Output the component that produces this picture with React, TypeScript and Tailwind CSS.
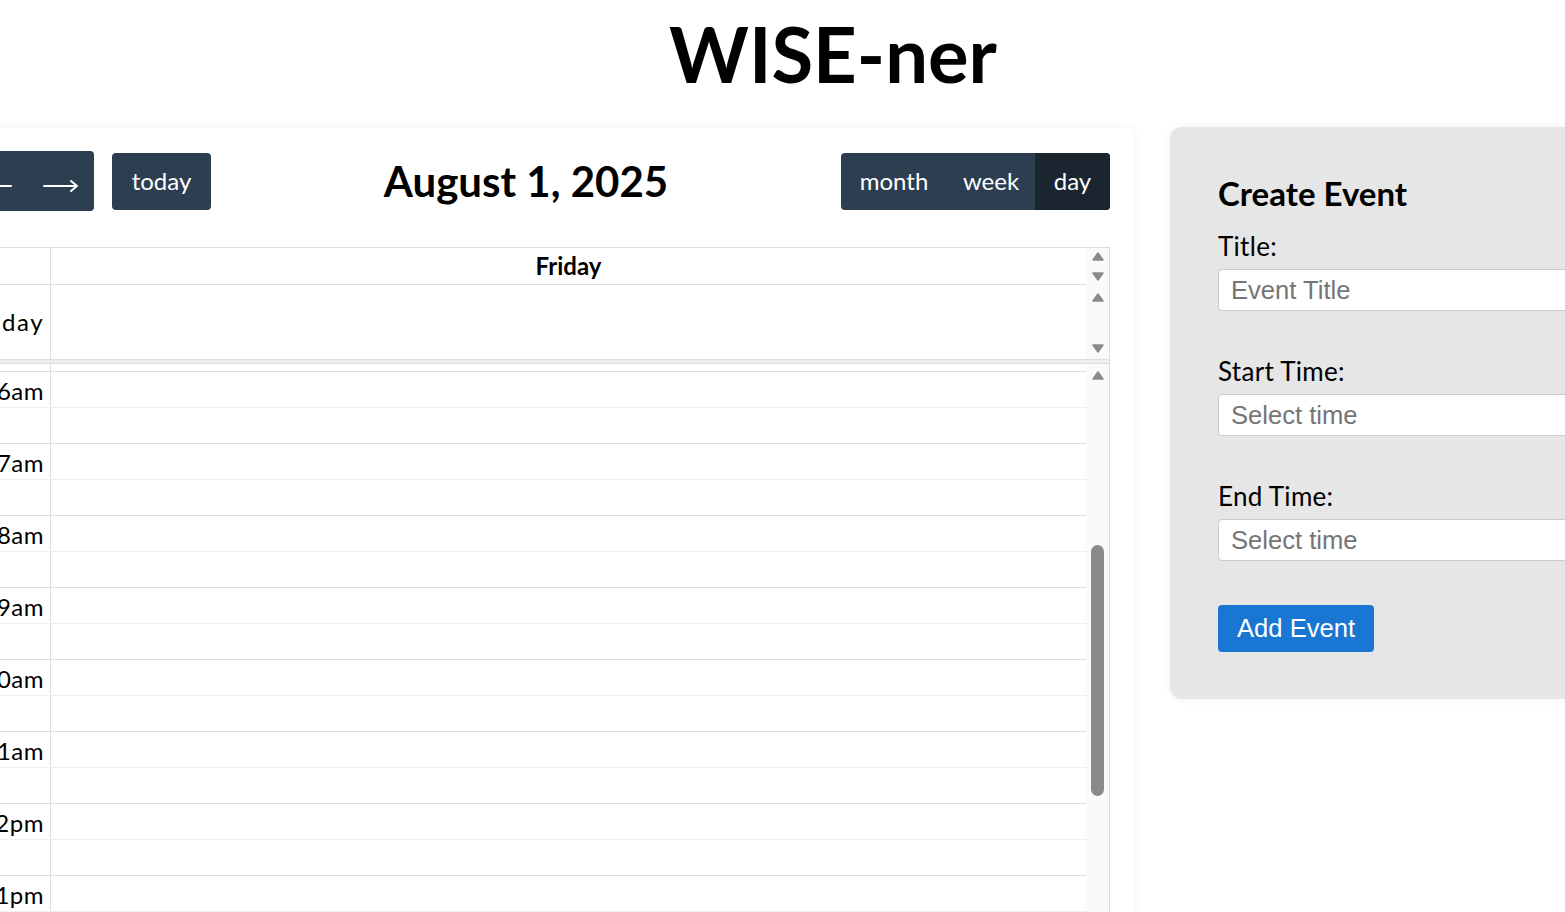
import React from "react";

function Up() {
  return (
    <svg width="12" height="9" viewBox="0 0 12 9" className="block">
      <path d="M6 1 L11 8 L1 8 Z" fill="#8a8a8a" stroke="#8a8a8a" strokeWidth="1.5" strokeLinejoin="round" />
    </svg>
  );
}
function Down() {
  return (
    <svg width="12" height="9" viewBox="0 0 12 9" className="block">
      <path d="M1 1 L11 1 L6 8 Z" fill="#8a8a8a" stroke="#8a8a8a" strokeWidth="1.5" strokeLinejoin="round" />
    </svg>
  );
}

function Arrow({ dir }: { dir: "left" | "right" }) {
  return (
    <svg width="36" height="14" viewBox="0 0 36 14" className="block">
      {dir === "right" ? (
        <path d="M1 7 H34 M28 2 L34 7 L28 12" fill="none" stroke="white" strokeWidth="2" strokeLinecap="round" strokeLinejoin="round" />
      ) : (
        <path d="M35 7 H2 M8 2 L2 7 L8 12" fill="none" stroke="white" strokeWidth="2" strokeLinecap="round" strokeLinejoin="round" />
      )}
    </svg>
  );
}

const hours = ["6am", "7am", "8am", "9am", "10am", "11am", "12pm", "1pm", "2pm"];

function Calendar() {
  return (
    <div className="w-[1198px] shrink-0 rounded-[10px] bg-white p-6 shadow-[0_0_10px_rgba(0,0,0,0.06)]">
      {/* toolbar */}
      <div className="mb-[36px] flex h-[60px] items-center">
        <div className="flex items-center">
          <div className="flex h-[60px] overflow-hidden rounded-[4px] bg-[#2c3e50]">
            <div className="flex w-[67px] items-center justify-center pt-[10px]">
              <Arrow dir="left" />
            </div>
            <div className="flex w-[67px] items-center justify-center pl-[1px] pt-[10px]">
              <Arrow dir="right" />
            </div>
          </div>
          <div className="ml-[18px] flex h-[57px] w-[99px] items-center justify-center rounded-[4px] bg-[#2c3e50] text-[24px] text-white">
            today
          </div>
        </div>
        <div className="flex-1 text-center text-[42px] font-bold leading-none">August 1, 2025</div>
        <div className="flex h-[57px] overflow-hidden rounded-[4px] bg-[#2c3e50] text-[24px] text-white">
          <div className="flex w-[106px] items-center justify-center">month</div>
          <div className="flex w-[88px] items-center justify-center">week</div>
          <div className="flex w-[75px] items-center justify-center bg-[#1a252f]">day</div>
        </div>
      </div>

      {/* grid */}
      <div className="border-x border-t border-[#ddd]">
        {/* header */}
        <div className="flex">
          <div className="flex h-[37px] flex-1 border-b border-[#ddd]">
            <div className="w-[90px] border-r border-[#ddd]" />
            <div className="flex flex-1 items-center justify-center text-[24px] font-bold">Friday</div>
          </div>
          <div className="flex w-[23px] flex-col items-center gap-[11px] bg-[#fafafa] pt-[4px]">
            <Up />
            <Down />
          </div>
        </div>
        {/* all-day */}
        <div className="flex h-[74px]">
          <div className="flex flex-1">
            <div className="flex w-[90px] items-center justify-end whitespace-nowrap border-r border-[#ddd] pr-[6px] text-[24px] tracking-[1.5px]">
              all-day
            </div>
            <div className="flex-1" />
          </div>
          <div className="flex w-[23px] flex-col items-center gap-[42px] bg-[#fafafa] pt-[8px]">
            <Up />
            <Down />
          </div>
        </div>
        {/* divider */}
        <div className="h-[5px] border-y border-[#ddd] bg-[#eee]" />
        {/* time grid */}
        <div className="flex">
          <div className="flex-1">
            <div className="flex h-[7px]">
              <div className="w-[90px] border-r border-[#ddd]" />
            </div>
            {hours.map((h) => (
              <React.Fragment key={h}>
                <div className="flex h-[36px] border-t border-[#ddd]">
                  <div className="flex w-[90px] items-center justify-end whitespace-nowrap border-r border-[#ddd] pr-[6px] pt-[3px] text-[24px] tracking-[0.5px]">
                    {h}
                  </div>
                  <div className="flex-1" />
                </div>
                <div className="flex h-[36px] border-t border-dotted border-[#ddd]">
                  <div className="w-[90px] border-r border-[#ddd]" />
                  <div className="flex-1" />
                </div>
              </React.Fragment>
            ))}
          </div>
          <div className="flex w-[23px] flex-col items-center bg-[#fafafa] pt-[7px]">
            <Up />
            <div className="mt-[165px] h-[251px] w-[13px] rounded-full bg-[#8a8a8a]" />
          </div>
        </div>
      </div>
    </div>
  );
}

function Field({ label, placeholder, first }: { label: string; placeholder: string; first?: boolean }) {
  return (
    <div className={first ? "mt-[20px]" : "mt-[45px]"}>
      <div className="h-[30px] text-[26px] leading-[30px] tracking-[0.3px]">{label}</div>
      <input
        readOnly
        placeholder={placeholder}
        className="mt-[8px] block h-[42px] w-full rounded-[4px] border border-[#ccc] bg-white px-[12px] font-['Liberation_Sans',Arial,sans-serif] text-[25.6px] outline-none placeholder:text-[#757575]"
      />
    </div>
  );
}

function Panel() {
  return (
    <div className="w-[560px] shrink-0 rounded-[12px] bg-[#e6e6e6] px-[48px] pb-[47px] pt-[48px] shadow-[0_0_10px_rgba(0,0,0,0.06)]">
      <h2 className="h-[36px] text-[33px] font-bold leading-[36px]">Create Event</h2>
      <Field first label="Title:" placeholder="Event Title" />
      <Field label="Start Time:" placeholder="Select time" />
      <Field label="End Time:" placeholder="Select time" />
      <button className="mt-[44px] flex h-[47px] items-center rounded-[4px] bg-[#1976d2] px-[19px] font-['Liberation_Sans',Arial,sans-serif] text-[25.6px] text-white">
        Add Event
      </button>
    </div>
  );
}

export default function App() {
  return (
    <div className="h-[912px] w-full overflow-hidden bg-white font-['Lato','Noto_Sans',sans-serif] text-black">
      <div className="ml-[-64px] w-[1794px]">
        <h1 className="h-[127px] pt-[8px] text-center text-[76px] font-bold leading-[92px]">WISE-ner</h1>
        <div className="flex items-start gap-[36px]">
          <Calendar />
          <Panel />
        </div>
      </div>
    </div>
  );
}
